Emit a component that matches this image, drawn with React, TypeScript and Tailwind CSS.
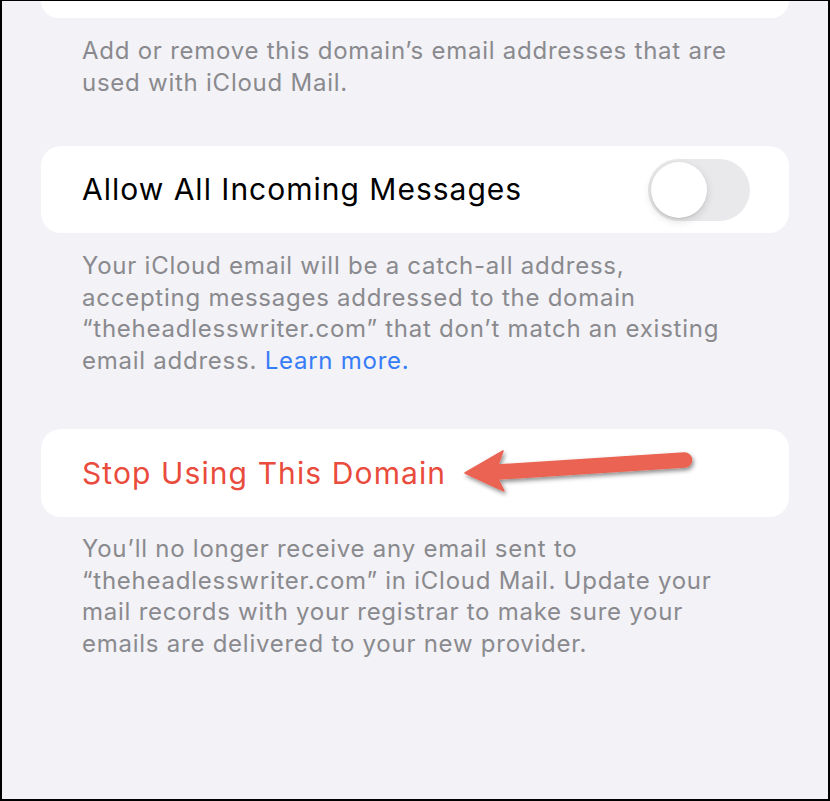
import React from "react";

const font = { fontFamily: "Inter, 'Noto Sans', sans-serif" };

export default function App() {
  return (
    <div
      className="relative w-[830px] h-[801px] overflow-hidden bg-[#f2f2f7] border-2 border-t border-black"
      style={font}
    >
      <div className="px-[39px]">
        <div className="h-[17px] rounded-b-[20px] bg-white" />
        <p className="mt-[17px] px-[41px] text-[24px] leading-[31.5px] tracking-[0.75px] text-[#8a8a8e] whitespace-nowrap">
          Add or remove this domain’s email addresses that are
          <br />
          used with iCloud Mail.
        </p>

        <div className="mt-[48px] h-[87px] rounded-[20px] bg-white flex items-center justify-between pl-[41px] pr-[39px]">
          <span className="text-[30px] tracking-[1px] text-black">Allow All Incoming Messages</span>
          <div className="relative w-[102px] h-[62px] rounded-full bg-[#e9e9eb]">
            <div className="absolute left-[3px] top-[3px] w-[56px] h-[56px] rounded-full bg-white shadow-[0_3px_8px_rgba(0,0,0,0.15),0_1px_1px_rgba(0,0,0,0.08)]" />
          </div>
        </div>
        <p className="mt-[17px] px-[41px] text-[24px] leading-[31.5px] tracking-[0.75px] text-[#8a8a8e] whitespace-nowrap">
          Your iCloud email will be a catch-all address,
          <br />
          accepting messages addressed to the domain
          <br />
          “theheadlesswriter.com” that don’t match an existing
          <br />
          email address. <span className="text-[#367cf6]">Learn more.</span>
        </p>

        <div className="mt-[53px] h-[88px] rounded-[20px] bg-white flex items-center pl-[41px]">
          <span className="text-[30px] tracking-[1.1px] text-[#e94b3c]">Stop Using This Domain</span>
        </div>
        <p className="mt-[16px] px-[41px] text-[24px] leading-[31.5px] tracking-[0.75px] text-[#8a8a8e] whitespace-nowrap">
          You’ll no longer receive any email sent to
          <br />
          “theheadlesswriter.com” in iCloud Mail. Update your
          <br />
          mail records with your registrar to make sure your
          <br />
          emails are delivered to your new provider.
        </p>
      </div>

      <svg
        className="absolute left-[450px] top-[440px]"
        width="260"
        height="70"
        viewBox="450 440 260 70"
      >
        <defs>
          <filter id="sh" x="-10%" y="-30%" width="130%" height="180%">
            <feDropShadow dx="1.5" dy="2.5" stdDeviation="2" floodColor="#000" floodOpacity="0.45" />
          </filter>
        </defs>
        <path
          d="M463 472 L501 450 L496 464 L682 452 A7 7 0 0 1 683 466 L496 478 L502 490 Z"
          fill="#ea6352"
          stroke="#ea6352"
          strokeWidth="1.5"
          strokeLinejoin="round"
          filter="url(#sh)"
        />
      </svg>
    </div>
  );
}
